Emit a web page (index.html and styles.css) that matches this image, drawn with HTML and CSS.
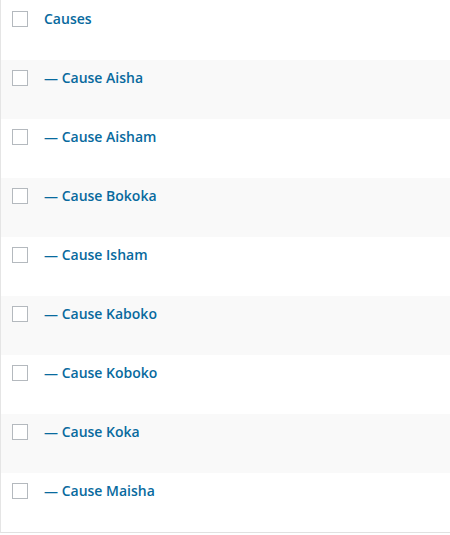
FILE: index.html
```html
<!DOCTYPE html>
<html>
<head>
<meta charset="utf-8">
<link rel="stylesheet" href="styles.css">
</head>
<body>
<div class="table">
  <div class="row"><span class="cb"></span><a class="title">Causes</a></div>
  <div class="row alt"><span class="cb"></span><a class="title">— Cause Aisha</a></div>
  <div class="row"><span class="cb"></span><a class="title">— Cause Aisham</a></div>
  <div class="row alt"><span class="cb"></span><a class="title">— Cause Bokoka</a></div>
  <div class="row"><span class="cb"></span><a class="title">— Cause Isham</a></div>
  <div class="row alt"><span class="cb"></span><a class="title">— Cause Kaboko</a></div>
  <div class="row"><span class="cb"></span><a class="title">— Cause Koboko</a></div>
  <div class="row alt"><span class="cb"></span><a class="title">— Cause Koka</a></div>
  <div class="row"><span class="cb"></span><a class="title">— Cause Maisha</a></div>
</div>
</body>
</html>
```
FILE: styles.css
```css
html, body {
  margin: 0;
  padding: 0;
  background: #fff;
}
.table {
  padding-top: 1px;
  border-left: 1px solid #e5e5e5;
  border-bottom: 1px solid #e1e1e1;
  width: 449px;
  font-family: "Open Sans", "Noto Sans", sans-serif;
}
.row {
  height: 59px;
  display: flex;
  align-items: flex-start;
  padding-left: 11px;
  box-sizing: border-box;
}
.row.alt {
  background: #f9f9f9;
}
.cb {
  width: 16px;
  height: 16px;
  box-sizing: border-box;
  border: 1px solid #b4b9be;
  background: #fff;
  margin-top: 10px;
  flex: none;
}
.title {
  margin-left: 16px;
  margin-top: 8px;
  font-size: 14px;
  font-weight: 600;
  line-height: 20px;
  color: #086a9e;
}
```
